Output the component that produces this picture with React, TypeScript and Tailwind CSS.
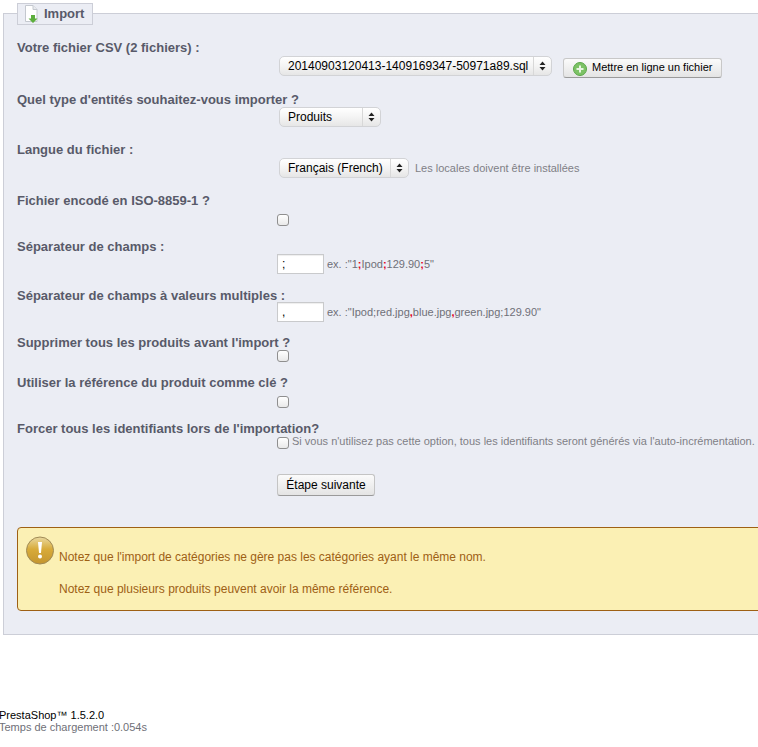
import React from "react";

function Select({ label, wide }: { label: string; wide: string }) {
  return (
    <div className={`flex h-[20px] ${wide} items-stretch rounded-[5px] border border-[#d2d3d6] bg-linear-to-b from-[#ffffff] via-[#f4f4f4] to-[#e6e6e6] text-[12px] leading-[17px] text-black`}>
      <div className="flex flex-1 items-center overflow-hidden whitespace-nowrap pl-[8px]">{label}</div>
      <div className="flex w-[18px] flex-col items-center justify-center gap-[1px] border-l border-[#d8d8d8]">
        <svg width="7" height="10" viewBox="0 0 7 10">
          <path d="M3.5 0.5 L6.5 4 H0.5 Z M3.5 9.5 L0.5 6 H6.5 Z" fill="#222" />
        </svg>
      </div>
    </div>
  );
}

function Check() {
  return (
    <input
      type="checkbox"
      readOnly
      className="h-[12px] w-[12px] appearance-none rounded-[3px] border border-[#8f8f8f] bg-linear-to-b from-[#ffffff] to-[#e9e9e9]"
    />
  );
}

function Row({ label, h, mt, children }: { label: string; h: string; mt: string; children: React.ReactNode }) {
  return (
    <div className={h}>
      <div className="h-[18px] text-[13px] font-bold leading-[20px] text-[#585a69]">{label}</div>
      <div className={`flex h-[20px] items-center ${mt}`}>{children}</div>
    </div>
  );
}

function TextBox({ value }: { value: string }) {
  return (
    <input
      readOnly
      value={value}
      className="h-[20px] w-[47px] border border-[#c9cacc] bg-white pl-[4px] text-[12px] text-black outline-none shadow-[inset_0_1px_1px_#eee]"
    />
  );
}

const Red = ({ c }: { c: string }) => <span className="font-bold text-[#e3001b]">{c}</span>;

export default function App() {
  return (
    <div className="h-[747px] w-[758px] overflow-hidden bg-white font-['Liberation_Sans',Arial,sans-serif]">
      <div className="w-[900px] pl-[3px] pt-[2px]">
        <fieldset className="h-[633px] border border-[#ccced7] bg-[#ebedf4] pl-[13px]">
          <legend className="relative top-[1px] flex h-[22px] w-[76px] items-center border border-[#ccced7] bg-[#ebedf4] pl-[6px] text-[13px] font-bold text-[#585a69]">
            <svg width="15" height="18" viewBox="0 0 15 18" className="mr-[5px]">
              <path d="M1.5 0.5 H9 L13 4.5 V16.5 H1.5 Z" fill="#fff" stroke="#c4c8cf" />
              <path d="M9 0.5 V4.5 H13" fill="#e8ebef" stroke="#c4c8cf" />
              <path d="M7 10 H11 V13.5 H13.5 L9 18 L4.5 13.5 H7 Z" fill="#5cae3c" />
            </svg>
            Import
          </legend>
          <div className="pt-[14px]">
            <Row label="Votre fichier CSV (2 fichiers) :" h="h-[52px]" mt="mt-0">
              <div className="ml-[262px] flex items-center">
                <Select label="20140903120413-1409169347-50971a89.sql" wide="w-[273px]" />
                <button className="ml-[11px] mt-[3px] flex h-[20px] w-[159px] items-center rounded-[3px] border border-[#c8c8c8] border-b-[#9a9a9a] bg-linear-to-b from-[#fbfbfb] to-[#e4e4e4] pl-[9px] text-[11px] text-black">
                  <svg width="14" height="14" viewBox="0 0 14 14" className="mr-[5px] mt-[3px]">
                    <circle cx="7" cy="7" r="6.5" fill="#7cc265" stroke="#5aa648" />
                    <path d="M7 3.5 V10.5 M3.5 7 H10.5" stroke="#e8f5e2" strokeWidth="2" />
                  </svg>
                  Mettre en ligne un fichier
                </button>
              </div>
            </Row>
            <Row label="Quel type d'entités souhaitez-vous importer ?" h="h-[50px]" mt="-mt-[1px]">
              <div className="ml-[262px]">
                <Select label="Produits" wide="w-[102px]" />
              </div>
            </Row>
            <Row label="Langue du fichier :" h="h-[51px]" mt="mt-0">
              <div className="ml-[262px] flex items-center">
                <Select label="Français (French)" wide="w-[130px]" />
                <span className="ml-[6px] text-[11px] text-[#7f7f86]">Les locales doivent être installées</span>
              </div>
            </Row>
            <Row label="Fichier encodé en ISO-8859-1 ?" h="h-[46px]" mt="mt-[1px]">
              <div className="ml-[260px] flex">
                <Check />
              </div>
            </Row>
            <Row label="Séparateur de champs :" h="h-[49px]" mt="-mt-[1px]">
              <div className="ml-[260px] flex items-center">
                <TextBox value=";" />
                <span className="ml-[3px] text-[11px] text-[#6f7078]">
                  ex. :"1<Red c=";" />Ipod<Red c=";" />129.90<Red c=";" />5"
                </span>
              </div>
            </Row>
            <Row label="Séparateur de champs à valeurs multiples :" h="h-[47px]" mt="-mt-[2px]">
              <div className="ml-[260px] flex items-center">
                <TextBox value="," />
                <span className="ml-[3px] text-[11px] text-[#6f7078]">
                  ex. :"Ipod;red.jpg<Red c="," />blue.jpg<Red c="," />green.jpg;129.90"
                </span>
              </div>
            </Row>
            <Row label="Supprimer tous les produits avant l'import ?" h="h-[40px]" mt="-mt-[5px]">
              <div className="ml-[260px] flex">
                <Check />
              </div>
            </Row>
            <Row label="Utiliser la référence du produit comme clé ?" h="h-[46px]" mt="mt-[1px]">
              <div className="ml-[260px] flex">
                <Check />
              </div>
            </Row>
            <Row label="Forcer tous les identifiants lors de l'importation?" h="h-[55px]" mt="-mt-[4px]">
              <div className="ml-[260px] flex items-center">
                <Check />
                <span className="ml-[3px] -mt-[3px] whitespace-nowrap text-[11px] text-[#7f7f86]">
                  Si vous n'utilisez pas cette option, tous les identifiants seront générés via l'auto-incrémentation.
                </span>
              </div>
            </Row>
            <button className="ml-[260px] block h-[22px] w-[98px] rounded-[3px] border border-[#c4c4c4] border-b-[#9a9a9a] bg-linear-to-b from-[#fbfbfb] to-[#e4e4e4] text-[12px] text-black">
              Étape suivante
            </button>
            <div className="mt-[31px] flex h-[84px] w-[800px] rounded-[4px] border border-[#9e6014] bg-[#fbf0b4] text-[12px] tracking-[-0.012px] text-[#9e6014]">
              <svg width="30" height="30" viewBox="0 0 30 30" className="ml-[7px] mt-[8px] shrink-0">
                <defs>
                  <linearGradient id="w" x1="0" y1="0" x2="0" y2="1">
                    <stop offset="0" stopColor="#e9d9a0" />
                    <stop offset="0.45" stopColor="#d8ab3a" />
                    <stop offset="1" stopColor="#c4952f" />
                  </linearGradient>
                </defs>
                <circle cx="15" cy="14.5" r="13.5" fill="url(#w)" stroke="#a08a55" />
                <path d="M13 6 H17 L16 17 H14 Z" fill="#fff" />
                <circle cx="15" cy="20.5" r="2" fill="#fff" />
              </svg>
              <div className="ml-[4px] pt-[21px] leading-[16px]">
                <p>Notez que l'import de catégories ne gère pas les catégories ayant le même nom.</p>
                <p className="mt-[16px]">Notez que plusieurs produits peuvent avoir la même référence.</p>
              </div>
            </div>
          </div>
        </fieldset>
      </div>
      <div className="-ml-[1px] mt-[74px] text-[11px] leading-[12px]">
        <div className="text-black">PrestaShop™ 1.5.2.0</div>
        <div className="text-[#6f7078]">Temps de chargement :0.054s</div>
      </div>
    </div>
  );
}
